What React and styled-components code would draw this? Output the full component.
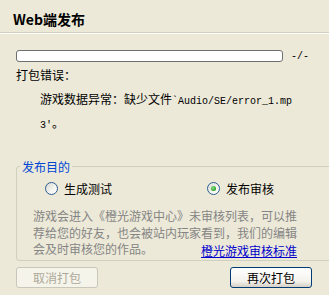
import React from "react";
import styled, { createGlobalStyle } from "styled-components";

const Global = createGlobalStyle`
  html, body {
    margin: 0;
    padding: 0;
    background: #ece9d8;
  }
  body {
    font-family: "Noto Sans CJK SC", "Noto Sans", sans-serif;
    font-size: 12px;
    color: #000000;
  }
`;

export default function App() {
  return (
    <Dialog>
      <Global />
      <Header>
        <Title>Web端发布</Title>
      </Header>

      <Content>
        <ProgressRow>
          <Bar />
          <Count>-/-</Count>
        </ProgressRow>

        <Label>打包错误：</Label>
        <ErrorText>
          游戏数据异常：缺少文件<Mono>`Audio/SE/error_1.mp</Mono>
          <br />
          <Mono>3'</Mono>。
        </ErrorText>

        <Group>
          <Legend>发布目的</Legend>
          <Options>
            <Option>
              <Radio />
              生成测试
            </Option>
            <Option>
              <Radio checked />
              发布审核
            </Option>
          </Options>
          <Desc>
            游戏会进入《橙光游戏中心》未审核列表，可以推荐给您的好友，也会被站内玩家看到，我们的编辑
          </Desc>
          <DescLast>
            <span>会及时审核您的作品。</span>
            <Link>橙光游戏审核标准</Link>
          </DescLast>
        </Group>

        <Buttons>
          <Button disabled>取消打包</Button>
          <Button>再次打包</Button>
        </Buttons>
      </Content>
    </Dialog>
  );
}

const Dialog = styled.div`
  width: 329px;
  height: 295px;
  overflow: hidden;
  background: #ece9d8;
`;

const Header = styled.header`
  height: 33px;
  box-sizing: border-box;
  padding: 12px 13px 0 13px;
  border-bottom: 1px solid #d2cfbf;
  box-shadow: 0 1px 0 #ffffff;
`;

const Title = styled.h1`
  margin: 0;
  font-size: 14px;
  line-height: 14px;
  font-weight: 700;
`;

const Content = styled.div`
  padding: 0 16px;
`;

const ProgressRow = styled.div`
  display: flex;
  align-items: center;
  gap: 8px;
  margin-top: 17px;
  padding-right: 4px;
  height: 12px;
`;

const Bar = styled.div`
  flex: 1;
  height: 12px;
  box-sizing: border-box;
  background: #ffffff;
  border: 1px solid #6f6f6f;
  border-radius: 3px;
`;

const Count = styled.span`
  font-family: "Liberation Mono", monospace;
  font-size: 10px;
  width: 18px;
`;

const Label = styled.div`
  margin-top: 6px;
  line-height: 14px;
`;

const ErrorText = styled.div`
  margin-top: 5px;
  padding-left: 24px;
  line-height: 24px;
  height: 48px;
`;

const Mono = styled.span`
  font-family: "Liberation Mono", monospace;
  font-size: 10px;
  line-height: 1;
`;

const Group = styled.fieldset`
  margin: 25px 0 0 0;
  padding: 0 14px 3px 16px;
  border: 1px solid #d0d0bf;
  border-radius: 3px;
`;

const Legend = styled.legend`
  margin-left: -13px;
  padding: 0 2px;
  color: #0046d5;
  line-height: 13px;
`;

const Options = styled.div`
  display: flex;
  align-items: center;
  margin-top: 9px;
  padding-left: 12px;
  height: 13px;
`;

const Option = styled.label`
  display: flex;
  align-items: center;
  gap: 6px;
  width: 162px;
  line-height: 13px;
`;

const Radio = styled.span`
  position: relative;
  width: 13px;
  height: 13px;
  box-sizing: border-box;
  border-radius: 50%;
  border: 1px solid #2a5f93;
  background: linear-gradient(135deg, #dcdcd5 0%, #f4f4f0 60%, #ffffff 100%);

  &::after {
    content: "";
    display: ${(p) => (p.checked ? "block" : "none")};
    position: absolute;
    left: 3px;
    top: 3px;
    width: 5px;
    height: 5px;
    border-radius: 50%;
    background: radial-gradient(circle at 40% 40%, #8ee08a, #21a121 70%);
  }
`;

const Desc = styled.p`
  margin: 13px 0 0 0;
  width: 265px;
  line-height: 16.5px;
  color: #858585;
`;

const DescLast = styled.div`
  display: flex;
  justify-content: space-between;
  align-items: flex-end;
  width: 264px;
  height: 16px;
  line-height: 16px;
  color: #858585;
`;

const Link = styled.a`
  margin-bottom: -2px;
  color: #0000cc;
  text-decoration: underline;
  cursor: pointer;
`;

const Buttons = styled.div`
  display: flex;
  justify-content: space-between;
  margin-top: 6px;
  padding-right: 1px;
`;

const Button = styled.button`
  width: 82px;
  height: 21px;
  padding: 0;
  font-family: "Noto Sans CJK SC", sans-serif;
  font-size: 12px;
  line-height: 12px;
  border-radius: 3px;
  border: 1px solid #003c74;
  color: #000000;
  background: linear-gradient(#ffffff 0%, #f3f2ec 70%, #d6d0c5 100%);

  &:disabled {
    border-color: #c9c7ba;
    color: #aca899;
    background: #f5f4ea;
  }
`;
